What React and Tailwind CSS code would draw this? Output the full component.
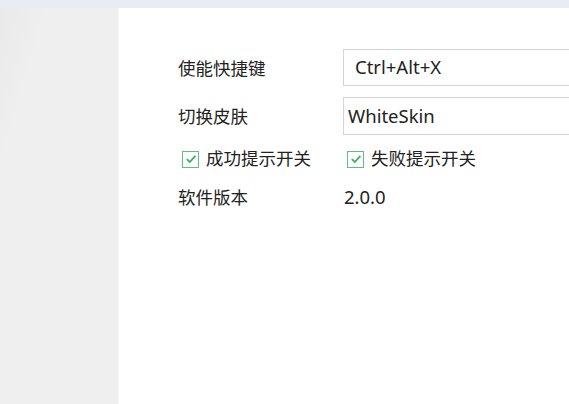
export default function App() {
  const font = { fontFamily: '"Noto Sans", "Noto Sans CJK SC", sans-serif' };

  return (
    <div className="w-[569px] h-[404px] flex flex-col overflow-hidden bg-white text-[#222]" style={font}>
      {/* top strip */}
      <div className="h-[8px] bg-[#e9ecf5]" />
      <div className="flex flex-1">
        {/* left panel */}
        <div className="w-[119px] bg-[#efefef] border-r border-[#f6f6f6] bg-gradient-to-br from-[#e9e9e9] to-[#efefef] to-[20%]" />
        {/* content */}
        <div className="flex-1 pl-[59px] pt-[41px]">
          <div className="grid grid-cols-[165px_1fr] items-center text-[17.5px] leading-none">
            <span className="pt-[3px]">使能快捷键</span>
            <div className="h-[37px] border border-[#d4d4d4] border-r-0 flex items-center pl-[11px] text-[18.5px]">Ctrl+Alt+X</div>

            <span className="mt-[11px] pt-[2px]">切换皮肤</span>
            <div className="mt-[11px] h-[38px] border border-[#d4d4d4] border-r-0 flex items-center pl-[4px] text-[18.5px]">WhiteSkin</div>

            <label className="mt-[15px] h-[18px] flex items-center gap-[7px] pl-[4px]">
              <CheckBox />
              <span>成功提示开关</span>
            </label>
            <label className="mt-[15px] h-[18px] flex items-center gap-[7px] pl-[4px]">
              <CheckBox />
              <span>失败提示开关</span>
            </label>

            <span className="mt-[20px]">软件版本</span>
            <span className="mt-[20px] pl-[1px] text-[18.5px]">2.0.0</span>
          </div>
        </div>
      </div>
    </div>
  );
}

function CheckBox() {
  return (
    <span className="w-[17px] h-[17px] border-[1.5px] border-[#5fbf80] bg-white flex items-center justify-center shrink-0">
      <svg width="12" height="12" viewBox="0 0 12 12" fill="none">
        <path d="M1.8 6.2 L4.8 9 L10.4 2.8" stroke="#3dae62" strokeWidth="1.8" />
      </svg>
    </span>
  );
}
